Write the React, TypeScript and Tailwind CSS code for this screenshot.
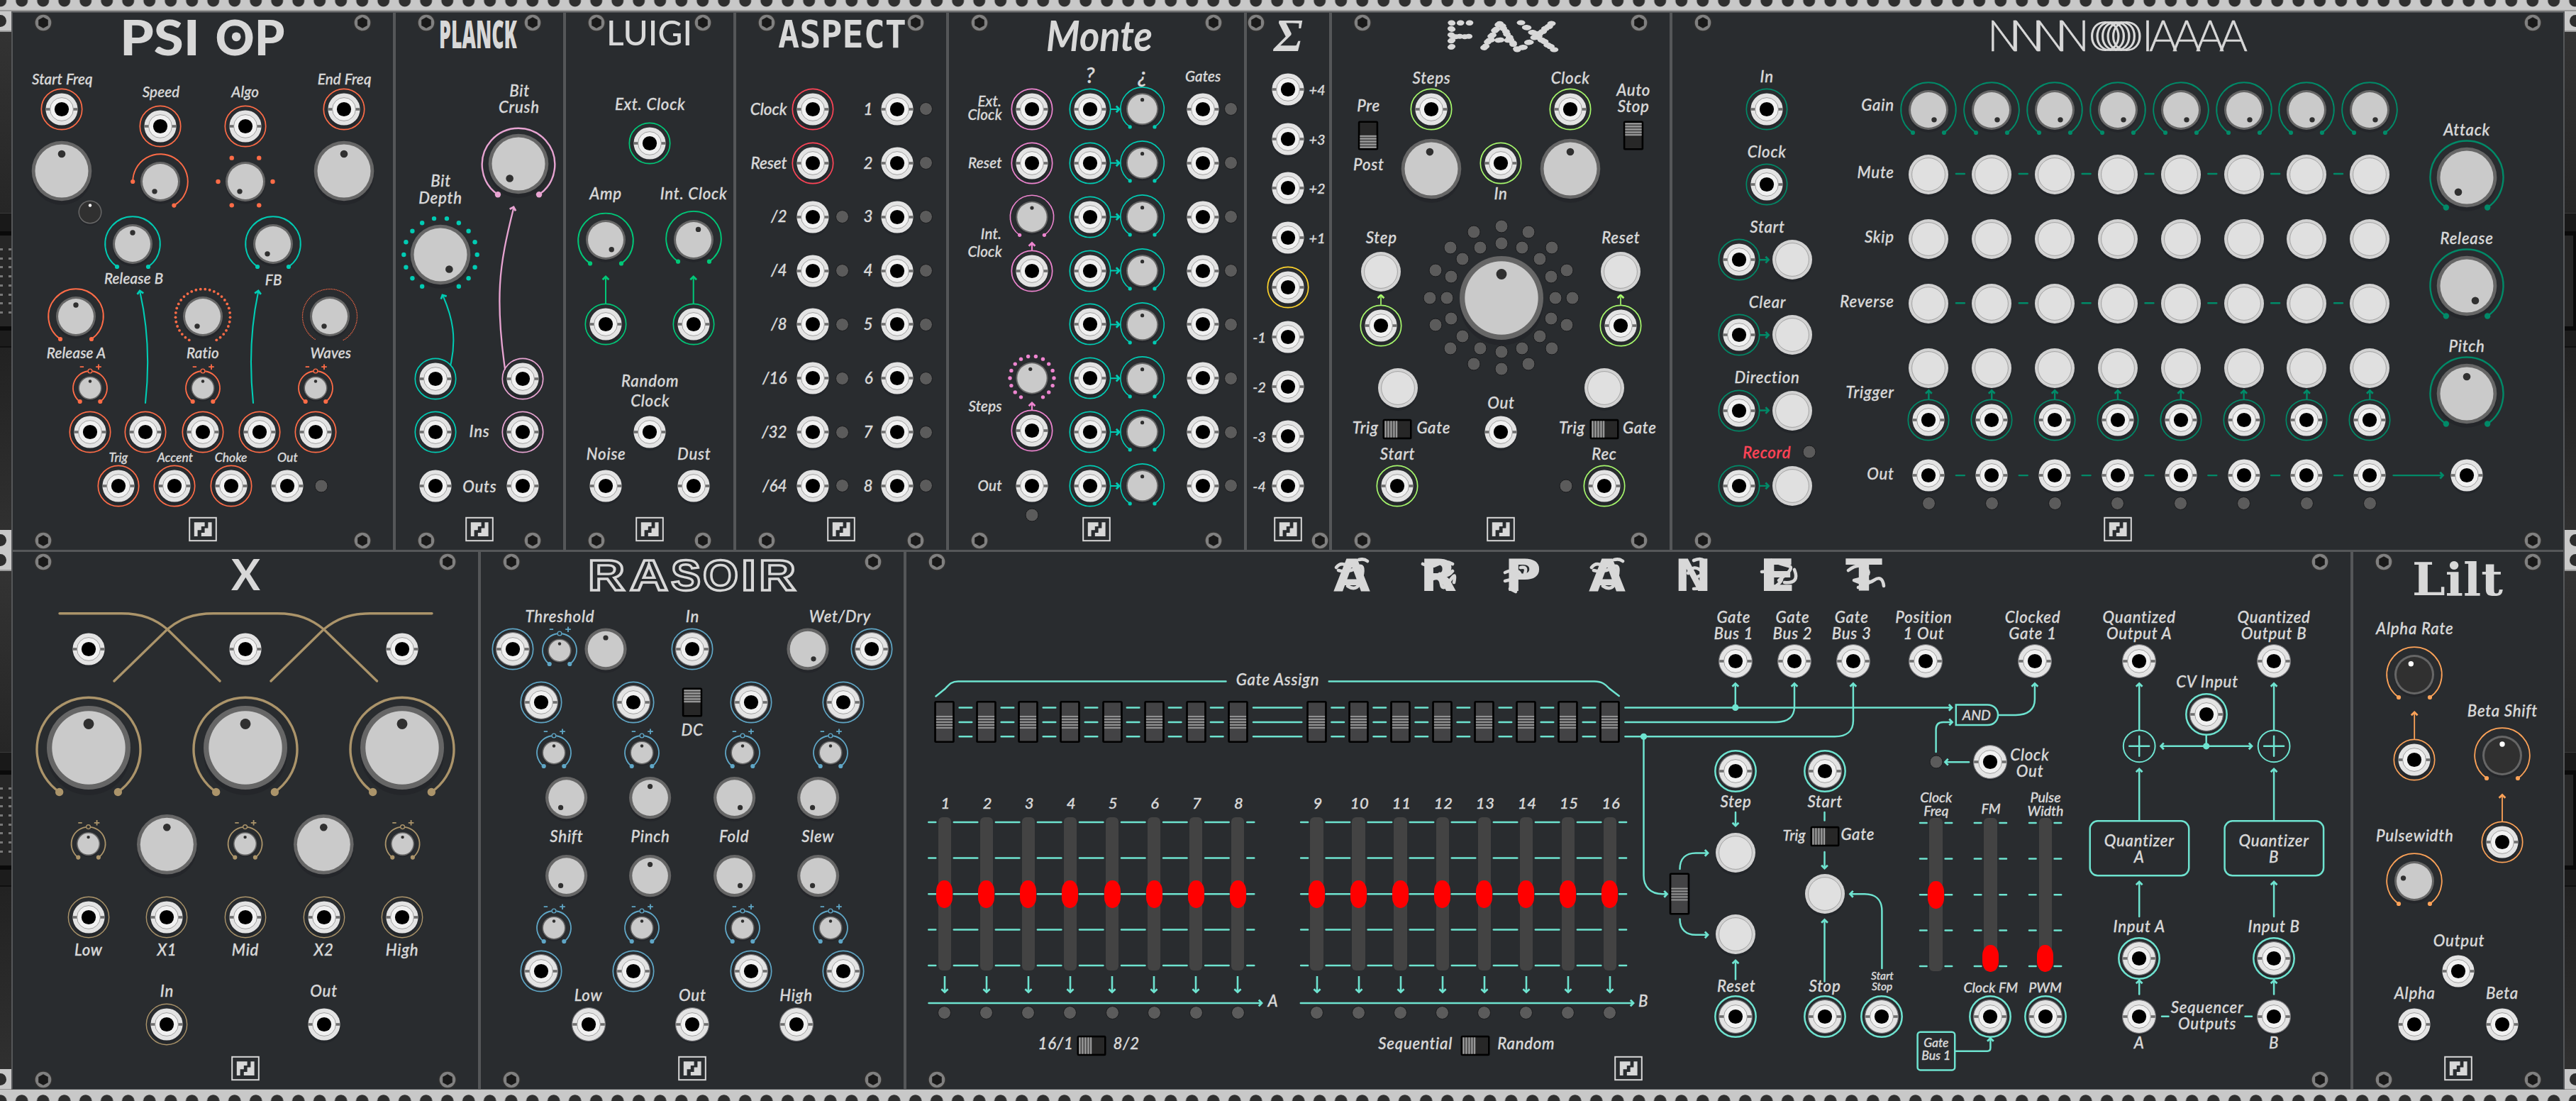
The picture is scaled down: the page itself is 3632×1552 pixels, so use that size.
import React, { ReactNode } from "react";

/* ---------- palette ---------- */
const INK = "#d8d8d8";
const ORANGE = "#ff6c47";
const TEAL = "#00ccb4";
const ROSE = "#e8a4d2";
const PINK = "#ee85d0";
const GREEN = "#00c878";
const RED = "#ff4457";
const YELLOW = "#fdd32c";
const LIME = "#a6f76c";
const FOREST = "#008a68";
const TAN = "#ab946a";
const BLUE = "#5fa6c6";
const AQUA = "#6ee3d0";
const AMBER = "#fca258";

/* ---------- geometry helpers ---------- */
const rad = (deg: number) => (deg * Math.PI) / 180;
const polar = (r: number, deg: number): [number, number] => [r * Math.sin(rad(deg)), -r * Math.cos(rad(deg))];
const arc = (r: number, from: number, to: number) => {
  const [x1, y1] = polar(r, from);
  const [x2, y2] = polar(r, to);
  return `M${x1} ${y1}A${r} ${r} 0 ${to - from > 180 ? 1 : 0} 1 ${x2} ${y2}`;
};

/* A drawing centred on its own origin; placed on the faceplate when x/y are given, otherwise in flow. */
function Art({ x, y, size, children }: { x?: number; y?: number; size: number; children: ReactNode }) {
  const free = x !== undefined;
  return (
    <svg
      className={free ? "absolute -translate-x-1/2 -translate-y-1/2 overflow-visible" : "block shrink-0 overflow-visible"}
      style={free ? { left: x, top: y } : undefined}
      width={size}
      height={size}
      viewBox={`${-size / 2} ${-size / 2} ${size} ${size}`}
      fill="none"
    >
      {children}
    </svg>
  );
}

type Pos = { x?: number; y?: number };

function Jack({ x, y, ring, w = 1.7, rim }: Pos & { ring?: string; w?: number; rim?: boolean }) {
  return (
    <Art x={x} y={y} size={46}>
      {ring && <circle r={28.7} stroke={ring} strokeWidth={w} />}
      <circle cy={4} r={22.5} fill="#23262a" />
      {rim && <circle r={23.4} fill="#e2e2e2" stroke="#77777a" strokeWidth={1.2} />}
      <circle r={22.6} fill="#e3e3e3" />
      <rect x={-22.8} y={-1.8} width={45.6} height={3.6} fill="#6e6e6e" />
      <circle r={16.4} fill="#f1f1f1" stroke="#8d8d8d" strokeWidth={0.8} />
      <circle r={10.1} fill="#000" />
    </Art>
  );
}

const KNOBS = {
  huge: [59, 51.7, 33.5, 7.4],
  large: [42.3, 37.5, 24, 5.3],
  wide: [29.6, 25.3, 16, 3.6],
  medium: [28, 25, 16, 3.7],
  small: [22.6, 20.7, 12.9, 2.6],
  trim: [16.6, 15, 9.5, 2.2],
} as const;

type Ring = { c: string; r?: number; from?: number; to?: number; w?: number; end?: number; dy?: number };

function Knob({
  x, y, kind = "medium", a = 0, dark, ring, dots, att,
}: Pos & {
  kind?: keyof typeof KNOBS; a?: number; dark?: boolean; ring?: Ring; att?: string;
  dots?: { c: string; r: number; angles: number[]; d: number };
}) {
  const [ro, ri, dist, dr] = KNOBS[kind];
  const [px, py] = polar(dist, a);
  const rr = ring ? ring.r ?? 38.8 : 0;
  const from = ring?.from ?? -145.5;
  const to = ring?.to ?? 145.5;
  const ends = [polar(rr, from), polar(rr, to)];
  return (
    <Art x={x} y={y} size={ro * 2}>
      <circle cy={ro * 0.13} r={ro} fill="#24262a" />
      {ring && (
        <g transform={`translate(0 ${ring.dy ?? 0})`}>
          <path d={arc(rr, from, to)} stroke={ring.c} strokeWidth={ring.w ?? 1.9} />
          {ends.map(([ex, ey], i) => (
            <circle key={i} cx={ex} cy={ey} r={ring.end ?? 3.1} fill={ring.c} />
          ))}
        </g>
      )}
      {dots &&
        dots.angles.map((t) => {
          const [cx, cy] = polar(dots.r, t);
          return <circle key={t} cx={cx} cy={cy} r={dots.d} fill={dots.c} />;
        })}
      {att && (
        <g stroke={att} strokeWidth={1.8}>
          <path d={arc(24, 8, 143)} />
          <path d={arc(24, -143, -8)} />
          <circle cy={-24} r={2.9} strokeWidth={1.4} />
          <circle cx={-14.3} cy={19} r={2.2} fill={att} />
          <circle cx={14.3} cy={19} r={2.2} fill={att} />
          <path d="M-14.3 -29.8h5.4M8.2 -29.8h7.6M12 -33.6v7.6" />
        </g>
      )}
      <circle r={ro} fill="#666" />
      <circle r={ri} fill={dark ? "#303030" : "#cacaca"} />
      <circle cx={px} cy={py} r={dr} fill={dark ? "#fff" : "#303030"} />
    </Art>
  );
}

function Button({ x, y }: Pos) {
  return (
    <Art x={x} y={y} size={56}>
      <circle cy={4} r={28} fill="#23262a" />
      <circle r={28} fill="#d2d2d2" />
      <circle r={23.4} fill="#e0e0e0" stroke="#959595" strokeWidth={0.8} />
    </Art>
  );
}

function Led({ x, y }: Pos) {
  return (
    <Art x={x} y={y} size={19}>
      <circle r={9} fill="#5b5b5b" stroke="#1b1c1e" strokeWidth={1} />
    </Art>
  );
}

function Toggle({ x, y, pos = "up" }: Pos & { pos?: "up" | "down" | "left" | "mid" }) {
  if (pos === "mid")
    return (
      <Art x={x} y={y} size={59}>
        <rect x={-14.3} y={-29.5} width={28.6} height={59} rx={2.5} fill="#000" />
        <rect x={-11.6} y={-27} width={23.2} height={54} fill="#434345" />
        {[-8.4, -4.5, -0.5, 3.5, 7.6].map((v) => (
          <rect key={v} x={-11.6} y={v} width={23.2} height={1.8} fill="#999" />
        ))}
      </Art>
    );
  const turn = pos === "left" ? -90 : pos === "down" ? 180 : 0;
  return (
    <Art x={x} y={y} size={41}>
      <g transform={`rotate(${turn})`}>
        <rect x={-14.2} y={-20.5} width={28.4} height={41} rx={2.5} fill="#000" />
        <rect x={-11.6} y={-18} width={23.2} height={36} fill="#272727" />
        <rect x={-11.6} y={-18} width={23.2} height={18} fill="#4a4a4a" />
        {[-17.6, -13.6, -9.6, -5.6, -1.8].map((v) => (
          <rect key={v} x={-11.6} y={v} width={23.2} height={2} fill="#a0a0a0" />
        ))}
      </g>
    </Art>
  );
}

function Logo({ w }: { w: number }) {
  return (
    <Art x={w / 2} y={729.7} size={40}>
      <rect x={-18.8} y={-16.2} width={37.6} height={32.4} stroke={INK} strokeWidth={2} />
      <path d="M-12.2 -9.8H2.6V-4H-2.2V1.2H-7.4V10H-12.2Z" fill={INK} />
      <path d="M7.4 -9.8H12.6V10H-2.2V5H2.6V-1.6H7.4Z" fill={INK} />
    </Art>
  );
}

function Screw({ x, y }: { x: number; y: number }) {
  return (
    <Art x={x} y={y} size={26}>
      <circle r={13} fill="#303030" />
      <circle r={11.3} fill="#808080" />
      <path d="M0 -7.8L6.8 -3.9V3.9L0 7.8L-6.8 3.9V-3.9Z" fill="#191919" />
    </Art>
  );
}

const SIZES = {
  15: "text-[15.5px]",
  17: "text-[17.5px]",
  19: "text-[19.5px]",
  20: "text-[20.5px] tracking-[0.01em]",
  21: "text-[22.2px] tracking-[0.035em]",
  30: "text-[31px]",
} as const;
const PX = { 15: 15.5, 17: 17.5, 19: 19.5, 20: 20.5, 21: 22.2, 30: 31 } as const;
type Size = keyof typeof SIZES;

/* Lettering: x is the centre (or the right edge), y the baseline. */
function T({
  x, y, s = 21, right, red, children,
}: { x: number; y: number; s?: Size; right?: boolean; red?: boolean; children: ReactNode }) {
  return (
    <span
      className={`absolute whitespace-pre leading-none ${SIZES[s]} ${right ? "-translate-x-full" : "-translate-x-1/2"} ${red ? "text-[#ff4457] [-webkit-text-stroke:0.35px_#ff4457]" : ""}`}
      style={{ left: x, top: y - PX[s] * 0.887 + 0.5 }}
    >
      {children}
    </span>
  );
}

function Wires({ c, w = 2, children }: { c: string; w?: number; children: ReactNode }) {
  return (
    <svg className="pointer-events-none absolute inset-0 h-full w-full" fill="none" stroke={c} strokeWidth={w} strokeLinecap="round">
      {children}
    </svg>
  );
}

/* Open arrow head; deg 0 points up. */
function Head({ x, y, deg = 0 }: { x: number; y: number; deg?: number }) {
  return <path transform={`translate(${x} ${y}) rotate(${deg})`} d="M-4.4 5.2L0 1L4.4 5.2" strokeLinecap="butt" strokeWidth={2.8} />;
}
function Arrow({ d, x, y, deg = 0 }: { d: string; x: number; y: number; deg?: number }) {
  return (
    <>
      <path d={d} />
      <Head x={x} y={y} deg={deg} />
    </>
  );
}

function Panel({ w, width, name, corner, children }: { w: number; width: string; name: string; corner?: boolean; children: ReactNode }) {
  return (
    <section aria-label={name} className={`relative h-[760px] shrink-0 border-2 border-b border-[#555759] bg-[#292c2f] ${width}`}>
      <div className="-ml-[2px] -mt-[2px] h-[760px] w-[calc(100%+4px)]">
        <div className="relative h-full">
          {children}
          {(corner ? [[15, 15.7], [w - 15, 745.7]] : [[45, 15.7], [w - 45, 15.7], [45, 745.7], [w - 45, 745.7]]).map(([sx, sy]) => (
            <Screw key={`${sx}-${sy}`} x={sx} y={sy} />
          ))}
          <Logo w={w} />
        </div>
      </div>
    </section>
  );
}

/* Module name; each piece is stretched to the span it occupies on the plate. */
type Piece = [text: string, x: number, len: number];
function Name({ pieces, y, size, className, children }: { pieces: Piece[]; y: number; size: number; className: string; children?: ReactNode }) {
  return (
    <svg className={`absolute left-0 top-0 h-[80px] w-full overflow-visible ${className}`} fill={INK}>
      {pieces.map(([t, x, len]) => (
        <text key={x} x={x} y={y} fontSize={size} textLength={len} lengthAdjust="spacingAndGlyphs">{t}</text>
      ))}
      {children}
    </svg>
  );
}

/* ---------- modules, upper row ---------- */
const sweep = (from: number, to: number, n: number) => Array.from({ length: n }, (_, i) => from + ((to - from) * i) / (n - 1));
const SIXTEEN = sweep(-150, 150, 16);

function PsiOp() {
  const o: Ring = { c: ORANGE };
  const t: Ring = { c: TEAL };
  return (
    <Panel w={540} width="w-[540px]" name="Psi Op">
      <Name y={61.5} size={69} className="font-['Lato'] font-black not-italic" pieces={[["PSI", 153, 113], ["OP", 287.5, 98]]}>
        <circle cx={317.2} cy={35.8} r={6.4} />
      </Name>
      <Wires c={TEAL} w={2.1}>
        <Arrow d="M189 552Q198 469.5 181.5 396" x={181} y={393} deg={-10} />
        <Arrow d="M341 552Q332.5 469.5 348 396" x={348.4} y={393} deg={10} />
      </Wires>
      <T x={71.9} y={102.3} s={20}>Start Freq</T>
      <T x={211} y={120.6} s={20}>Speed</T>
      <T x={329.7} y={120.6} s={20}>Algo</T>
      <T x={469.7} y={102.3} s={20}>End Freq</T>
      <Jack x={71} y={138} ring={ORANGE} />
      <Jack x={210.4} y={161.7} ring={ORANGE} />
      <Jack x={329.7} y={161.7} ring={ORANGE} />
      <Jack x={469} y={138} ring={ORANGE} />
      <Knob x={71} y={224.5} kind="large" />
      <Knob x={469} y={224.5} kind="large" />
      <Knob x={111} y={283.4} kind="trim" dark />
      <Knob x={210.4} y={239.9} a={-150} ring={{ c: ORANGE, from: -90, to: 150 }} />
      <Knob x={329.7} y={239.9} a={-150} dots={{ c: ORANGE, r: 38.5, d: 3.2, angles: [-150, -90, -30, 30, 90, 150] }} />
      <Knob x={170.8} y={327.9} ring={t} />
      <Knob x={369.4} y={327.9} a={-150} ring={t} />
      <T x={172.6} y={383.9} s={20}>Release B</T>
      <T x={369.7} y={385.4} s={20}>FB</T>
      <Knob x={91.1} y={429.9} ring={o} />
      <Knob x={270} y={429.9} a={-150} dots={{ c: ORANGE, r: 38.5, d: 1.9, angles: sweep(-150, 150, 32) }} />
      <Knob x={449} y={429.9} a={-150} dots={{ c: ORANGE, r: 38.5, d: 0.75, angles: sweep(-147, 150, 88) }} />
      <T x={91.5} y={488.3} s={20}>Release A</T>
      <T x={270} y={488.3} s={20}>Ratio</T>
      <T x={450.4} y={488.3} s={20}>Waves</T>
      {[111, 270, 429].map((x) => <Knob key={x} x={x} y={530.9} kind="trim" att={ORANGE} />)}
      {[111, 189, 270, 349.7, 429].map((x) => <Jack key={x} x={x} y={593.2} ring={ORANGE} />)}
      <T x={150.8} y={634.8} s={17}>Trig</T>
      <T x={230.8} y={634.8} s={17}>Accent</T>
      <T x={309.7} y={634.8} s={17}>Choke</T>
      <T x={389.4} y={634.8} s={17}>Out</T>
      {[150.8, 230, 309.7].map((x) => <Jack key={x} x={x} y={668.9} ring={ORANGE} />)}
      <Jack x={389.4} y={668.9} />
      <Led x={437} y={669} />
    </Panel>
  );
}

function Planck() {
  return (
    <Panel w={240} width="w-[240px]" name="Planck">
      <Name y={52} size={54} className="font-['Noto_Sans'] font-black not-italic" pieces={[["PLANCK", 63, 110]]} />
      <Wires c={TEAL}><Arrow d="M79.3 498.7C88 460 82 432 69 402" x={67.4} y={399} deg={-27} /></Wires>
      <Wires c={ROSE} w={2.3}><Arrow d="M156 504C149 455 147 420 149 385C151 350 158 318 168 278" x={168.4} y={275} deg={17} /></Wires>
      <T x={176.7} y={120.1}>Bit</T>
      <T x={176} y={142.9}>Crush</T>
      <Knob x={175.3} y={214.6} kind="large" a={-149} ring={{ c: ROSE, r: 51.3, w: 2.4, end: 4.2, dy: 1 }} />
      <T x={65.7} y={247.3}>Bit</T>
      <T x={65} y={271}>Depth</T>
      <Knob x={64.7} y={343.3} kind="large" a={149} dots={{ c: TEAL, r: 51.7, d: 3.2, angles: SIXTEEN }} />
      {[517.5, 593.2].map((y) => (
        <React.Fragment key={y}>
          <Jack x={58} y={y} ring={TEAL} />
          <Jack x={181.3} y={y} ring={ROSE} />
        </React.Fragment>
      ))}
      <Jack x={58} y={668.9} />
      <Jack x={181.3} y={668.9} />
      <T x={120} y={600.1}>Ins</T>
      <T x={120.3} y={678.3}>Outs</T>
    </Panel>
  );
}

function Luigi() {
  return (
    <Panel w={240} width="w-[240px]" name="Luigi">
      <Name y={47.5} size={49} className="font-['Lato'] font-medium not-italic" pieces={[["LUIGI", 59, 121]]} />
      <Wires c={GREEN} w={2}>
        <Arrow d="M58 412V376" x={58} y={373} />
        <Arrow d="M181.7 412V376" x={181.7} y={373} />
      </Wires>
      <T x={120.7} y={139.4}>Ext. Clock</T>
      <Jack x={120} y={185.9} ring={GREEN} />
      <T x={58} y={265.1}>Amp</T>
      <T x={182} y={265.1}>Int. Clock</T>
      <Knob x={58} y={321.5} a={149} ring={{ c: GREEN, dy: 1.4 }} />
      <Knob x={181.7} y={321.5} a={24} ring={{ c: GREEN, dy: -1.3 }} />
      <Jack x={58} y={441.3} ring={GREEN} />
      <Jack x={181.7} y={441.3} ring={GREEN} />
      <T x={120.7} y={529.4}>Random</T>
      <T x={120.7} y={557.1}>Clock</T>
      <Jack x={120} y={593.2} />
      <T x={58.7} y={631.8}>Noise</T>
      <T x={182.7} y={631.8}>Dust</T>
      <Jack x={58} y={668.9} />
      <Jack x={181.7} y={668.9} />
    </Panel>
  );
}

function Aspect() {
  const left = ["Clock", "Reset", "/2", "/4", "/8", "/16", "/32", "/64"];
  return (
    <Panel w={300} width="w-[300px]" name="Aspect">
      <Name y={51} size={54} className="font-['DejaVu_Sans_Mono'] font-bold not-italic" pieces={[["ASPECT", 61, 181]]} />
      <div className="flex flex-col pt-[100px]">
        {left.map((t, i) => (
          <div key={t} className="grid h-[75.86px] grid-cols-[73.6px_73.6px_9.2px_38.3px_68.8px_13px] items-center justify-items-center">
            <span className="justify-self-end whitespace-pre text-[22.5px] leading-none">{t}</span>
            <Jack ring={i < 2 ? RED : undefined} />
            {i < 2 ? <span /> : <Led />}
            <span className="justify-self-end text-[22.5px] leading-none">{i + 1}</span>
            <Jack />
            <Led />
          </div>
        ))}
      </div>
    </Panel>
  );
}

function Monte() {
  const rows = [137.9, 213.8, 289.7, 365.5, 441.4, 517.2, 593.1, 669];
  return (
    <Panel w={420} width="w-[420px]" name="Monte">
      <Name y={56} size={60} className="font-['Lato'] font-bold" pieces={[["Monte", 139, 150]]} />
      <Wires c={TEAL} w={2}>
        {rows.map((y) => <Arrow key={y} d={`M230 ${y}H240`} x={243} y={y} deg={90} />)}
      </Wires>
      <Wires c={PINK} w={2.2}>
        <Arrow d="M119 336V328" x={119} y={325.5} />
        <Arrow d="M119 562V554" x={119} y={551} />
      </Wires>
      <T x={201} y={101.3} s={30}>?</T>
      <T x={275} y={101.3} s={30}>¿</T>
      <T x={360.2} y={98.8} s={20}>Gates</T>
      <T x={76} y={134} s={20} right>Ext.</T>
      <T x={76.7} y={152.8} s={20} right>Clock</T>
      <T x={76.7} y={220.6} s={20} right>Reset</T>
      <T x={76} y={321} s={20} right>Int.</T>
      <T x={76.7} y={345.3} s={20} right>Clock</T>
      <T x={76.7} y={563.5} s={20} right>Steps</T>
      <T x={76.7} y={675.9} s={20} right>Out</T>
      <Jack x={119} y={rows[0]} ring={PINK} />
      <Jack x={119} y={rows[1]} ring={PINK} />
      <Knob x={119} y={rows[2]} kind="small" ring={{ c: PINK, r: 30.7, end: 2.6, w: 1.6 }} />
      <Jack x={119} y={rows[3]} ring={PINK} />
      <Knob x={119} y={rows[5]} kind="small" a={-10} dots={{ c: PINK, r: 31, d: 2.7, angles: SIXTEEN }} />
      <Jack x={119} y={590.7} ring={PINK} />
      <Jack x={119} y={669} />
      <Led x={119} y={710} />
      <div className="flex flex-col pl-[172px] pt-[100px]">
        {rows.map((y) => (
          <div key={y} className="grid h-[75.86px] grid-cols-[58px_90px_79.4px_0.2px] items-center justify-items-center">
            <Jack ring={TEAL} />
            <Knob kind="small" ring={{ c: TEAL, r: 30.7, end: 2.6, w: 1.6 }} />
            <Jack />
            <Led />
          </div>
        ))}
      </div>
    </Panel>
  );
}

function Sigma() {
  const steps = ["+4", "+3", "+2", "+1", "", "-1", "-2", "-3", "-4"];
  return (
    <Panel w={120} width="w-[120px]" name="Sigma" corner>
      <Name y={56} size={66} className="font-['Liberation_Serif'] font-bold" pieces={[["Σ", 40, 41]]} />
      <div className="flex flex-col pt-[74.7px]">
        {steps.map((t, i) => (
          <div key={i} className="grid h-[69.9px] grid-cols-[28.8px_62.4px_21.4px] items-center justify-items-center text-[20px] leading-none">
            <span className="justify-self-end whitespace-pre">{i > 4 ? t : ""}</span>
            <Jack ring={t ? undefined : YELLOW} />
            <span className="justify-self-end whitespace-pre">{i < 4 ? t : ""}</span>
          </div>
        ))}
      </div>
    </Panel>
  );
}

function Fax() {
  return (
    <Panel w={480} width="w-[480px]" name="Fax">
      <svg className="absolute left-0 top-0 h-[80px] w-full overflow-visible font-['Lato'] font-thin not-italic" fill="none" stroke={INK} strokeWidth={7} strokeLinecap="round" strokeDasharray="0.1 8.6" fontSize={53}>
        {([["F", 161, 44], ["A", 213, 52], ["X", 264, 54]] as const).map(([t, x, len]) => (
          <text key={t} x={x} y={54} textLength={len} lengthAdjust="spacingAndGlyphs">{t}</text>
        ))}
      </svg>
      <Wires c={LIME} w={1.7}>
        <Arrow d="M71 413V403" x={71} y={399} />
        <Arrow d="M409 413V403" x={409} y={399} />
      </Wires>
      {[141.7, 338.2].map((x) => (
        <React.Fragment key={x}>
          <Jack x={x} y={137.9} ring={LIME} />
          <Knob x={x} y={222} kind="large" a={x < 200 ? -5 : 0} />
        </React.Fragment>
      ))}
      <T x={142.5} y={101.8}>Steps</T>
      <T x={338.2} y={101.8}>Clock</T>
      <T x={53.5} y={141.4}>Pre</T>
      <Toggle x={53.1} y={175} pos="down" />
      <T x={53.9} y={224.5}>Post</T>
      <Jack x={240.1} y={214.1} ring={LIME} />
      <T x={240.1} y={265.6}>In</T>
      <T x={427.2} y={119.1}>Auto</T>
      <T x={427.2} y={141.9}>Stop</T>
      <Toggle x={426.8} y={175} />
      <T x={71.7} y={327}>Step</T>
      <T x={409.4} y={327}>Reset</T>
      <Button x={70.9} y={366.6} />
      <Button x={409} y={366.6} />
      <Jack x={70.5} y={442.8} ring={LIME} />
      <Jack x={409} y={442.8} ring={LIME} />
      {Array.from({ length: 16 }, (_, i) => {
        const [ax, ay] = polar(76.7, i * 22.5);
        const [bx, by] = polar(100.6, i * 22.5);
        return (
          <React.Fragment key={i}>
            <Led x={240.5 + ax} y={403.7 + ay} />
            <Led x={240.5 + bx} y={403.7 + by} />
          </React.Fragment>
        );
      })}
      <Knob x={240.5} y={403.7} kind="huge" />
      <Button x={94.6} y={531.4} />
      <Button x={385.7} y={531.4} />
      <T x={49.2} y={595.2}>Trig</T>
      <Toggle x={94.4} y={588.8} pos="left" />
      <T x={145.3} y={595.2}>Gate</T>
      <T x={340.6} y={595.2}>Trig</T>
      <Toggle x={385.7} y={588.8} pos="left" />
      <T x={435.9} y={595.2}>Gate</T>
      <T x={94.6} y={631.8}>Start</T>
      <T x={386} y={631.8}>Rec</T>
      <Jack x={94.4} y={668.9} ring={LIME} />
      <Led x={332.3} y={669} />
      <Jack x={385.7} y={668.9} ring={LIME} />
      <T x={240.5} y={560.6}>Out</T>
      <Jack x={240.1} y={593.2} />
    </Panel>
  );
}

function Nano() {
  const cols = Array.from({ length: 8 }, (_, i) => 363.4 + i * 88.85);
  const line = (h: string, node: ReactNode) => (
    <div className={`flex items-center ${h}`}>
      {cols.map((c) => <div key={c} className="flex w-[88.85px] justify-center">{node}</div>)}
    </div>
  );
  return (
    <Panel w={1260} width="w-[1260px]" name="Nano">
      <svg className="absolute left-0 top-0 h-[80px] w-full overflow-visible font-['Lato'] font-light not-italic" fill={INK} stroke={INK} strokeWidth={0.5} fontSize={61}>
        <text x="446 478.6 511.2 543.8" y="56">NNNN</text>
        <text x="588.5 596 603.5 611 618.5" y="55.5" fontSize={60} strokeWidth={0}>OOOOO</text>
        <text x="664 674 707 740 773" y="56">IAAAA</text>
      </svg>
      <Wires c={FOREST} w={2.4}>
        {cols.slice(0, 7).map((c) => <path key={c} d={`M${c + 38.5} 229h12M${c + 38.5} 411.2h12M${c + 38.5} 654.1h12`} />)}
        {cols.map((c) => <Arrow key={c} d={`M${c} 546V537`} x={c} y={533.5} />)}
        {[350.2, 456.3, 562.5, 668.9].map((y) => <Arrow key={y} d={`M125.5 ${y}H135`} x={138.6} y={y} deg={90} />)}
        <Arrow d="M1018.5 654.1H1087" x={1089.5} y={654.1} deg={90} />
      </Wires>
      <T x={135.2} y={99.8}>In</T>
      <Jack x={135.2} y={137.9} ring={FOREST} />
      <T x={135.2} y={206.2}>Clock</T>
      <Jack x={135.2} y={243.8} ring={FOREST} />
      <T x={136} y={312.1}>Start</T>
      <T x={136} y={418}>Clear</T>
      <T x={135.5} y={523.9}>Direction</T>
      <T x={135.2} y={629.8} red>Record</T>
      <Led x={194.8} y={620.9} />
      {[350.2, 456.3, 562.5, 668.9].map((y) => (
        <React.Fragment key={y}>
          <Jack x={96.4} y={y} ring={FOREST} />
          <Button x={170.9} y={y} />
        </React.Fragment>
      ))}
      {([["Gain", 140.4], ["Mute", 235.4], ["Skip", 326.5], ["Reverse", 417.5], ["Trigger", 544.7], ["Out", 660]] as const).map(([t, y]) => (
        <T key={t} x={314.8} y={y} right>{t}</T>
      ))}
      <div className="flex flex-col pl-[319px] pt-[93px]">
        {line("h-[91px]", <Knob a={150} ring={{ c: FOREST }} />)}
        {line("h-[91px]", <Button />)}
        {line("h-[91px]", <Button />)}
        {line("h-[91px]", <Button />)}
        {line("h-[91px]", <Button />)}
        {line("h-[55.5px]", <Jack ring={FOREST} />)}
        {line("h-[101px]", <Jack />)}
        {line("-mt-[20.5px] h-[19px]", <Led />)}
      </div>
      <T x={1122.1} y={175.5}>Attack</T>
      <T x={1122.1} y={328}>Release</T>
      <T x={1122.1} y={479.9}>Pitch</T>
      {[[234.4, -150], [386.8, 150], [539.3, 0]].map(([y, a]) => (
        <Knob key={y} x={1122.1} y={y} kind="large" a={a} ring={{ c: FOREST, r: 51.5, end: 4.2, w: 2.4 }} />
      ))}
      <Jack x={1122.1} y={654.1} />
    </Panel>
  );
}

/* ---------- modules, lower row ---------- */
function Crossover() {
  const rowOf = (cls: string, cells: ReactNode[]) => (
    <div className={`grid grid-cols-5 justify-items-center ${cls}`}>
      {cells.map((cell, i) => <React.Fragment key={i}>{cell ?? <span />}</React.Fragment>)}
    </div>
  );
  const lab = (t: string) => <span className="text-[22.2px] leading-none tracking-[0.035em]">{t}</span>;
  const big = <Knob kind="huge" ring={{ c: TAN, r: 73, w: 3.4, end: 5.7, dy: 2.3 }} />;
  const trim = <Knob kind="trim" att={TAN} />;
  const tan = <Jack ring={TAN} w={1.4} />;
  return (
    <Panel w={660} width="w-[660px]" name="X">
      <Name y={56} size={62} className="font-['Lato'] font-bold not-italic" pieces={[["X", 310, 41]]} />
      <Wires c={TAN} w={3.4}>
        <path d="M68 88.8H155C185 88.8 203 97 220 111L294 184" />
        <path d="M145 184L220 111C237 97 255 88.8 285 88.8H375C405 88.8 423 97 440.5 111L515.5 184" />
        <path d="M366 184L440.5 111C458 97 476 88.8 506 88.8H593" />
      </Wires>
      <div className="flex w-[606.4px] flex-col pl-[53.6px] pt-[60px]">
        {rowOf("h-[157.2px] items-center", [<Jack />, null, <Jack />, null, <Jack />])}
        {rowOf("h-[122.2px] items-center", [big, null, big, null, big])}
        {rowOf("h-[149.2px] items-center", [trim, <Knob kind="large" />, trim, <Knob kind="large" />, trim])}
        {rowOf("h-[57.2px] items-center", [tan, tan, tan, tan, tan])}
        {rowOf("h-[35.4px] items-center", [lab("Low"), lab("X1"), lab("Mid"), lab("X2"), lab("High")])}
        {rowOf("h-[51.4px] items-end", [null, lab("In"), null, lab("Out"), null])}
        {rowOf("h-[71.8px] items-center", [null, tan, null, <Jack />, null])}
      </div>
    </Panel>
  );
}

function Rasoir() {
  const outer = [87.3, 217.4, 382.7, 512.8];
  const trims = [105.1, 229.3, 370.8, 494.6];
  const knobs: [number, string][] = [[-150, "Shift"], [0, "Pinch"], [150, "Fold"], [-150, "Slew"]];
  return (
    <Panel w={600} width="w-[600px]" name="Rasoir">
      <svg className="absolute left-0 top-0 h-[80px] w-full overflow-visible font-['Liberation_Sans'] font-bold not-italic" fill="none" stroke={INK} strokeWidth={3.4} fontSize={62}>
        {([["R", 153, 52], ["A", 212, 54], ["S", 270, 42], ["O", 315, 50], ["I", 369, 21], ["R", 394, 52]] as const).map(([t, x, len]) => (
          <text key={x} x={x} y={56} textLength={len} lengthAdjust="spacingAndGlyphs">{t}</text>
        ))}
      </svg>
      <T x={113.4} y={100.7}>Threshold</T>
      <T x={300.4} y={100.7}>In</T>
      <T x={508.4} y={100.7}>Wet/Dry</T>
      {[47.4, 299.7, 552.7].map((x) => <Jack key={x} x={x} y={138.6} ring={BLUE} rim />)}
      <Knob x={113} y={141.1} kind="trim" att={BLUE} />
      <Knob x={177.5} y={138.6} kind="wide" />
      <Knob x={463.4} y={138.6} kind="wide" a={150} />
      <Toggle x={300} y={214.2} />
      <T x={300} y={261.3}>DC</T>
      {outer.map((x) => <Jack key={x} x={x} y={213.5} ring={BLUE} rim />)}
      {trims.map((x) => <Knob key={x} x={x} y={284.8} kind="trim" att={BLUE} />)}
      <div className="flex pl-[63.9px] pt-[319px]">
        {knobs.map(([a, t]) => (
          <div key={t} className="flex w-[118.1px] flex-col items-center">
            <Knob kind="wide" a={a} />
            <span className="my-[14.2px] text-[22.2px] leading-[22.1px] tracking-[0.035em]">{t}</span>
            <Knob kind="wide" a={a} />
          </div>
        ))}
      </div>
      {trims.map((x) => <Knob key={x} x={x} y={531.7} kind="trim" att={BLUE} />)}
      {outer.map((x) => <Jack key={x} x={x} y={592.5} ring={BLUE} rim />)}
      {([["Low", 153.5], ["Out", 300.3], ["High", 446.5]] as const).map(([t, x]) => (
        <React.Fragment key={t}>
          <T x={x} y={634.9}>{t}</T>
          <Jack x={x} y={668.3} rim />
        </React.Fragment>
      ))}
    </Panel>
  );
}

function Fader({ low }: { low?: boolean }) {
  return (
    <div className={`flex h-[216.5px] w-[18.4px] justify-center rounded-[6px] bg-[#434343] ${low ? "pt-[179.5px]" : "pt-[89.5px]"}`}>
      <div className={`w-[23px] shrink-0 rounded-[11px/15px] bg-[#ff0000] ${low ? "h-[38px]" : "h-[39px]"}`} />
    </div>
  );
}

function Bank({ first }: { first: number }) {
  return (
    <div className="flex">
      {Array.from({ length: 8 }, (_, i) => (
        <div key={i} className="flex w-[59.05px] flex-col items-center pt-[212.4px]">
          <Toggle pos="mid" />
          <span className="mt-[73.4px] h-[22px] pl-[3px] text-[22px] leading-none tracking-[0.03em]">{first + i}</span>
          <div className="mt-[9.2px]"><Fader /></div>
          <svg className="mt-[8px] h-[24.5px] w-[12px]" fill="none" stroke={AQUA} strokeWidth={2.6} viewBox="0 0 12 24.5">
            <path d="M6 0V22M1.4 18.2L6 22.6L10.6 18.2" />
          </svg>
          <div className="mt-[17px]"><Led /></div>
        </div>
      ))}
    </div>
  );
}

const BANK_X = [55.8, 580.6];
const FADER_Y = [383, 433.4, 484.3, 534.6, 585];

function Arpanet() {
  const gaps = BANK_X.flatMap((b) => Array.from({ length: 7 }, (_, i) => b + 29.5 + i * 59.05));
  const letters: [string, number][] = [["A", 630], ["R", 752], ["P", 871], ["A", 990], ["N", 1111], ["E", 1230], ["T", 1352]];
  return (
    <Panel w={2040} width="w-[2040px]" name="Arpanet">
      <Name y={56.5} size={63} className="font-['DejaVu_Sans'] font-bold not-italic" pieces={letters.map(([t, x]): Piece => [t, x - 26, 52])}>
        <g fill="none" stroke={INK} strokeWidth={4.6} strokeLinecap="round" strokeLinejoin="round">
          {[630, 990].map((x) => <path key={x} d={`M${x - 22} 24q6 -8 14 -3t14 -6M${x + 10} 13q7 -2 12 2M${x - 19} 28q14 4 26 -4t7 14t-20 12`} />)}
          <path d="M730 19q12 6 22 0t20 0M754 33q10 6 18 -4M742 41q12 -6 14 6t12 -4t6 2" />
          <path d="M846 31q14 -6 20 0t-20 12M868 24q10 -2 6 8M853 54l8 4" />
          <path d="M1112 14q10 -4 14 0M1104 32q8 -14 20 -2M1114 40q10 -10 12 2t-14 12" />
          <path d="M1208 30q14 -2 24 4t-4 16M1222 14q14 6 24 8t-14 20M1240 45q22 2 14 -18" />
          <path d="M1330 28q16 -12 26 -2t-18 16q16 8 28 0t14 8M1344 52q12 -2 16 -8" />
        </g>
      </Name>
      <Wires c={AQUA} w={2.5}>
        <path d="M43.5 205.5L57 194.5C63 188 66 184.6 75 184.6H452.5M597.7 184.6H972C983 184.6 988 189 993 194.5L1006.7 205" />
        {gaps.map((g) => <path key={g} d={`M${g - 8.7} 221.4h17.6M${g - 8.7} 241.9h17.6M${g - 8.7} 262.3h17.6`} />)}
        <path d="M491 221.4H559.3M491 241.9H559.3M491 262.3H559.3" />
        {FADER_Y.map((y) => (
          <g key={y}>
            {gaps.map((g) => <path key={g} d={`M${g - 16.5} ${y}h33.5`} />)}
            {BANK_X.map((b) => <path key={b} d={`M${b - 22.5} ${y}h10M${b + 426.5} ${y}h10`} />)}
            {[1453.6, 1530.4, 1607.6].map((x) => <path key={x} d={`M${x - 22.6} ${y + 1}h9.6M${x + 13} ${y + 1}h9.6`} />)}
          </g>
        ))}
        <Arrow d="M33.5 637.9H501" x={504} y={637.9} deg={90} />
        <Arrow d="M557.8 637.9H1025" x={1028} y={637.9} deg={90} />
        <Arrow d="M1015.4 221.4H1474" x={1477} y={221.4} deg={90} />
        <Arrow d="M1015.4 241.9H1228C1245 241.9 1254 234 1254 220V190" x={1254} y={186.5} />
        <Arrow d="M1015.4 262.3H1311C1328 262.3 1336.9 254 1336.9 240V190" x={1336.9} y={186.5} />
        <Arrow d="M1170.8 221.4V190" x={1170.8} y={186.5} />
        <circle cx={1170.8} cy={221.4} r={3.4} fill={AQUA} />
        <circle cx={1041.5} cy={262.3} r={3.4} fill={AQUA} />
        <Arrow d="M1041.5 262.3V458C1041.5 474 1051 484.3 1068 484.3H1073" x={1075.5} y={484.3} deg={90} />
        <Arrow d="M1092.5 449C1092.5 434 1101 426.4 1115 426.4H1130" x={1133} y={426.4} deg={90} />
        <Arrow d="M1092.5 519.5C1092.5 534 1101 541.8 1115 541.8H1130" x={1133} y={541.8} deg={90} />
        <Arrow d="M1171 369V386" x={1171} y={389} deg={180} />
        <Arrow d="M1171 604.5V581" x={1171} y={577} />
        <path d="M1296.5 369V380.5" />
        <Arrow d="M1296.5 425V446" x={1296.5} y={449} deg={180} />
        <Arrow d="M1296.5 607.5V523" x={1296.5} y={519.5} />
        <Arrow d="M1377.4 589V508C1377.4 492 1368 484.3 1353 484.3H1335" x={1331.5} y={484.3} deg={-90} />
        <path d="M1481.8 217.5H1526C1546 217.5 1546 246 1526 246H1481.8Z" />
        <Arrow d="M1542 231.9H1566C1583 231.9 1592.9 224 1592.9 210V190" x={1592.9} y={186.5} />
        <Arrow d="M1453.6 284V252C1453.6 245 1457 241.9 1464 241.9H1474" x={1477.5} y={241.9} deg={90} />
        <Arrow d="M1500 298.2H1469" x={1465.5} y={298.2} deg={-90} />
        <rect x={1427.6} y={678.8} width={52.6} height={53.6} rx={4} />
        <Arrow d="M1481 705.7H1526Q1530.4 705.7 1530.4 701V690" x={1530.4} y={686.5} />
        {[1740.2, 1930.1].map((x) => (
          <g key={x}>
            <Arrow d={`M${x} 253V190`} x={x} y={186.5} />
            <circle cx={x} cy={275.8} r={22.4} strokeWidth={2} />
            <path d={`M${x - 14} 275.8h28M${x} 261.8v28`} />
            <Arrow d={`M${x} 380V311`} x={x} y={307} />
            <rect x={x - 69.5} y={381.3} width={139.5} height={77} rx={11} />
            <Arrow d={`M${x} 516V470`} x={x} y={466} />
            <Arrow d={`M${x} 625.5V609`} x={x} y={605} />
          </g>
        ))}
        <path d="M1834.7 260V275.8M1772 656.8h9.5M1889.5 656.8h9.5" />
        <Arrow d="M1773 275.8H1897" x={1900} y={275.8} deg={90} />
        <Head x={1769.6} y={275.8} deg={-90} />
        <circle cx={1834.7} cy={275.8} r={3.4} fill={AQUA} />
      </Wires>
      <div className="relative flex gap-[52.4px] pl-[26.3px]">
        <Bank first={1} />
        <Bank first={9} />
      </div>
      <T x={525.6} y={190}>Gate Assign</T>
      <T x={519} y={643.4}>A</T>
      <T x={1041.1} y={643.4}>B</T>
      <T x={212.6} y={703.2}>16/1</T>
      <Toggle x={262.8} y={697.7} pos="left" />
      <T x={312.2} y={703.2}>8/2</T>
      <T x={719.7} y={703.2}>Sequential</T>
      <Toggle x={804.4} y={697.7} pos="left" />
      <T x={875.8} y={703.2}>Random</T>
      {([["Gate", "Bus 1", 1168.3], ["Gate", "Bus 2", 1251.5], ["Gate", "Bus 3", 1334.7], ["Position", "1 Out", 1436.5], ["Clocked", "Gate 1", 1590], ["Quantized", "Output A", 1740.2], ["Quantized", "Output B", 1930.1]] as const).map(([a, b, x]) => (
        <React.Fragment key={x}>
          <T x={x} y={101.7}>{a}</T>
          <T x={x} y={125.2}>{b}</T>
        </React.Fragment>
      ))}
      {[1170.8, 1254, 1336.9, 1439, 1592.9, 1740.2, 1930.1].map((x) => <Jack key={x} x={x} y={156.1} rim />)}
      <T x={1510.8} y={238.9} s={19}>AND</T>
      <Led x={1453.6} y={298.2} />
      <Jack x={1530.4} y={298.2} rim />
      <T x={1585.8} y={295.7}>Clock</T>
      <T x={1586.1} y={318.7}>Out</T>
      <Jack x={1171} y={311.2} ring={AQUA} w={2.5} rim />
      <T x={1171.5} y={362.1}>Step</T>
      <Button x={1171} y={426.4} />
      <Button x={1171} y={541.1} />
      <T x={1172.2} y={622.4}>Reset</T>
      <Toggle x={1092.3} y={484.3} pos="mid" />
      <Jack x={1296.5} y={311.2} ring={AQUA} w={2.5} rim />
      <T x={1297.2} y={362.1}>Start</T>
      <T x={1253.6} y={408.5} s={20}>Trig</T>
      <Toggle x={1296.5} y={403} pos="left" />
      <T x={1343.3} y={408.5}>Gate</T>
      <Button x={1296.5} y={484.3} />
      <T x={1297} y={622.4}>Stop</T>
      <T x={1378} y={605.5} s={15}>Start</T>
      <T x={1377.6} y={620.4} s={15}>Stop</T>
      {[1171, 1296.5, 1377.2, 1530.4, 1607.6].map((x) => <Jack key={x} x={x} y={656.8} ring={AQUA} w={2.5} rim />)}
      <T x={1453.8} y={355.1} s={19}>Clock</T>
      <T x={1453.8} y={374} s={19}>Freq</T>
      <T x={1531.1} y={371} s={19}>FM</T>
      <T x={1608} y={355.1} s={19}>Pulse</T>
      <T x={1608} y={374} s={19}>Width</T>
      <div className="absolute left-[1444.4px] top-[376.5px] flex gap-[58.7px]">
        <Fader />
        <Fader low />
        <Fader low />
      </div>
      <T x={1530.8} y={622.4} s={19}>Clock FM</T>
      <T x={1607.6} y={622.4} s={19}>PWM</T>
      <T x={1453.8} y={699.7} s={17}>Gate</T>
      <T x={1453.8} y={718.2} s={17}>Bus 1</T>
      <T x={1836.1} y={193}>CV Input</T>
      <Jack x={1834.7} y={231.4} ring={AQUA} w={2.5} rim />
      {([["A", 1740.2], ["B", 1930.1]] as const).map(([t, x]) => (
        <React.Fragment key={t}>
          <T x={x} y={417.4}>Quantizer</T>
          <T x={x} y={439.9}>{t}</T>
          <T x={x} y={538.1}>{`Input ${t}`}</T>
          <Jack x={x} y={575} ring={AQUA} w={2.5} rim />
          <Jack x={x} y={656.8} rim />
          <T x={x} y={702.2}>{t}</T>
        </React.Fragment>
      ))}
      <T x={1836.1} y={652.4}>Sequencer</T>
      <T x={1836.1} y={675.3}>Outputs</T>
    </Panel>
  );
}

function Lilt() {
  const ring: Ring = { c: AMBER, w: 1.8 };
  return (
    <Panel w={300} width="w-[300px]" name="Lilt">
      <Name y={63} size={63} className="font-['DejaVu_Serif'] font-bold not-italic" pieces={[["Lilt", 85, 128]]} />
      <Wires c={AMBER} w={1.8}>
        <Arrow d="M88.2 265V230" x={88.2} y={227} />
        <Arrow d="M212 381.5V346.5" x={212} y={343.5} />
      </Wires>
      <T x={88.7} y={118.2}>Alpha Rate</T>
      <Knob x={88.2} y={175} a={-17} dark ring={ring} />
      <Jack x={88.2} y={295.2} ring={AMBER} />
      <T x={212.4} y={233.9}>Beta Shift</T>
      <Knob x={212} y={288.8} dark ring={ring} />
      <Jack x={212} y={411} ring={AMBER} />
      <T x={88.7} y={410.5}>Pulsewidth</T>
      <Knob x={88.2} y={465.8} a={-75} ring={ring} />
      <T x={151} y={558.6}>Output</T>
      <Jack x={150.1} y={592.5} />
      <T x={88.7} y={631.9}>Alpha</T>
      <T x={212} y={631.9}>Beta</T>
      <Jack x={88.2} y={668.3} />
      <Jack x={212} y={668.3} />
    </Panel>
  );
}

/* ---------- rack frame ---------- */
function SideRow({ right }: { right?: boolean }) {
  const rail = (edge: string) => (
    <div className={`flex h-[29px] shrink-0 items-center overflow-hidden border-[#9a9a9a] bg-[#c8c8c8] ${edge} ${right ? "pl-[7px]" : ""}`}>
      <div className={`h-[17px] w-[17px] shrink-0 rounded-full bg-[#2d2d2d] ${right ? "" : "-ml-[8px]"}`} />
    </div>
  );
  return (
    <div className="flex h-[760px] flex-col bg-[#2b2b2b]">
      {rail("border-b-2")}
      <div className="h-[255px] bg-gradient-to-b from-[#333] to-[#262626]" />
      <div className="h-[26px] border-t border-[#3a3a3a] bg-[#191919]" />
      <div className="h-[6px] bg-[#0a0a0a]" />
      <div className={`flex h-[128px] bg-[#262626] pt-[18px] ${right ? "border-r-4 border-[#0a0a0a]" : "justify-between"}`}>
        {!right && ["a", "b"].map((k) => (
          <div key={k} className="h-[94px] w-[4px] bg-[repeating-linear-gradient(#777_0_3px,transparent_3px_12.7px)]" />
        ))}
      </div>
      <div className="h-[6px] bg-[#0a0a0a]" />
      <div className="h-[24px] border-b-2 border-[#101010] bg-[#1c1c1c]" />
      <div className="flex-1 bg-gradient-to-b from-[#222] to-[#303030]" />
      {rail("border-t-0")}
    </div>
  );
}

export default function App() {
  return (
    <main className="flex h-[1552px] w-[3632px] flex-col overflow-hidden bg-[#292c2f] font-['Lato',sans-serif] font-medium italic text-[#d8d8d8] [-webkit-text-stroke:0.35px_#d8d8d8] [&_svg]:[-webkit-text-stroke:0]">
      <div className="h-4 shrink-0 border-b-2 border-[#9b9b9b] bg-[#c8c8c8] bg-[radial-gradient(circle_at_15px_1px,#2f2f2f_8px,transparent_8.8px)] bg-[length:30px_16px] bg-[position:-14.3px_0]" />
      <div className="flex shrink-0">
        <div className="w-4 shrink-0"><SideRow /><SideRow /></div>
        <div className="flex w-[3600px] shrink-0 flex-col">
          <div className="flex">
            <PsiOp />
            <Planck />
            <Luigi />
            <Aspect />
            <Monte />
            <Sigma />
            <Fax />
            <Nano />
          </div>
          <div className="flex">
            <Crossover />
            <Rasoir />
            <Arpanet />
            <Lilt />
          </div>
        </div>
        <div className="w-4 shrink-0"><SideRow right /><SideRow right /></div>
      </div>
      <div className="-mt-px h-[17px] shrink-0 border-t border-[#8d8d8d] bg-[#c8c8c8] bg-[radial-gradient(circle_at_15px_16px,#2f2f2f_8.3px,transparent_9px)] bg-[length:30px_17px] bg-[position:-14.3px_0]" />
    </main>
  );
}
